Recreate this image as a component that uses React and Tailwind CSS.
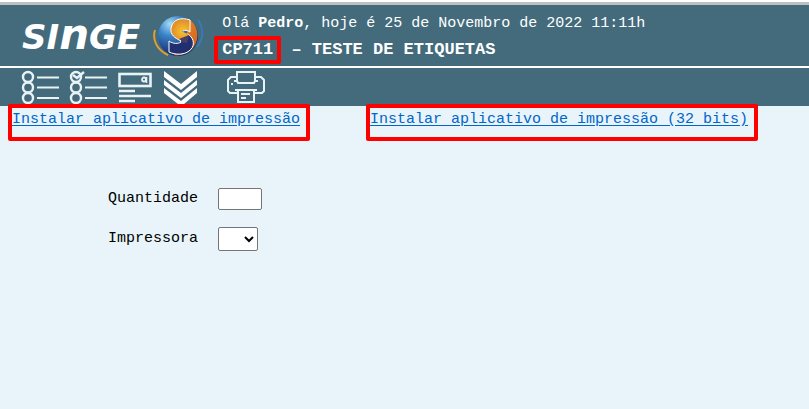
import { useState } from "react";

const ListIcon = ({ checked }) => (
  <svg width="40" height="34" viewBox="0 0 40 34" fill="none" stroke="#e9f3f6">
    <circle cx="8" cy="7" r="5" strokeWidth="2.4" />
    <circle cx="8" cy="17.5" r="5" strokeWidth="2.4" />
    <circle cx="8" cy="28" r="5" strokeWidth="2.4" />
    <path d="M17 7.5h22M17 17.5h22M17 28h22" strokeWidth="2" />
    {checked && <path d="M5 5l4 3 7-6" strokeWidth="2.4" />}
  </svg>
);

const FormIcon = () => (
  <svg width="36" height="34" viewBox="0 0 36 34" fill="none" stroke="#e9f3f6">
    <rect x="3.5" y="4" width="31" height="12" strokeWidth="2.6" />
    <circle cx="28" cy="9.5" r="2" strokeWidth="1.8" />
    <path d="M30.5 7v6" strokeWidth="1.6" />
    <path d="M3 21h16M3 26h32M3 31h16" strokeWidth="2.6" />
  </svg>
);

const ArrowsIcon = () => (
  <svg width="34" height="34" viewBox="0 0 34 34" fill="#ffffff">
    <path d="M0 1l17 13L33 1v6L17 20 0 7z" />
    <path d="M0 10l17 13 16-13v5L17 28 0 15z" />
    <path d="M0 18l17 13 16-13v5L20 34h-6L0 23z" />
  </svg>
);

const PrinterIcon = () => (
  <svg width="40" height="34" viewBox="0 0 40 34" fill="none" stroke="#e9f3f6" strokeWidth="2">
    <path d="M11 11V2h18v9" />
    <path d="M11 7H5L2 10v11l2 2h7M29 7h6l3 3v11l-2 2h-7" />
    <path d="M8 11h3l1 2h16l1-2h3M9 20h22" />
    <path d="M12 20v12h16V20" />
    <path d="M15 24h9M15 28h5" />
    <path d="M6 13v2" />
  </svg>
);

const Globe = () => (
  <svg width="54" height="46" viewBox="0 0 54 46" fill="none">
    <defs>
      <radialGradient id="blue" cx="0.3" cy="0.2" r="0.75">
        <stop offset="0" stopColor="#a5dcf8" />
        <stop offset="0.4" stopColor="#3a84c8" />
        <stop offset="1" stopColor="#1b2f72" />
      </radialGradient>
      <linearGradient id="orange" x1="0" y1="0" x2="1" y2="1">
        <stop offset="0" stopColor="#e8902f" />
        <stop offset="1" stopColor="#cf601c" />
      </linearGradient>
      <radialGradient id="sun" gradientUnits="userSpaceOnUse" cx="31" cy="18" r="12">
        <stop offset="0" stopColor="#f8c52c" />
        <stop offset="1" stopColor="#e08a2a" />
      </radialGradient>
    </defs>
    <path d="M3 17c-3 10 2 20 13 25" stroke="#e0a030" strokeWidth="2" />
    <path d="M46 7c6 9 6 18-1 27" stroke="#3b78b8" strokeWidth="2" />
    <circle cx="26" cy="23" r="20" fill="url(#blue)" />
    <path d="M37 6a20 20 0 0 1-15 36l8-10 5-12z" fill="url(#orange)" />
    {/* lower and upper halves of the swirl */}
    <path
      d="M17 28c4 3 9 3 12 1l-2-5 9-3c7 5 7 13 1 17-5 4-14 4-20 1z"
      fill="#20306f"
      stroke="#ffffff"
    />
    <path
      d="M38 7v12c-3-2-6-2-8-1 2 2 5 2 7 4l-8 6c-6-3-11-6-10-13 2-9 10-11 19-8z"
      fill="url(#sun)"
    />
    <path
      d="M29 28c-6-3-11-6-10-13 2-9 10-11 19-8v12c-3-2-5-2-7-1"
      stroke="#ffffff"
    />
    <path d="M27 26c2 1 3 2 2 3l6 1 2-8z" fill="#4a3d68" />
  </svg>
);

const Header = () => (
  <header className="flex h-16 items-center gap-3 border-t-3 border-[#c0c0c0] bg-[#436b7c] pl-[22px] text-white">
    <div className="flex shrink-0 items-center gap-3">
      <span className="pt-px font-['DejaVu_Sans'] text-[34px] leading-10 font-bold italic">
        SI<span className="text-[42px] leading-10">n</span>GE
      </span>
      <Globe />
    </div>
    <div className="pt-1 pl-1">
      <p className="text-[15px] leading-6">
        Olá <b>Pedro</b>, hoje é 25 de Novembro de 2022 11:11h
      </p>
      <h1 className="-ml-2 flex items-center text-[17px] leading-5 font-bold">
        <span className="rounded-xs border-4 border-[#ff0000] px-1">CP711</span>
        <span className="whitespace-pre"> – TESTE DE ETIQUETAS</span>
      </h1>
    </div>
  </header>
);

const Toolbar = () => (
  <nav className="flex h-10 items-center border-t-2 border-white bg-[#436b7c] pl-5">
    <button type="button" aria-label="Lista" className="mr-2">
      <ListIcon />
    </button>
    <button type="button" aria-label="Selecionar" className="mr-2">
      <ListIcon checked />
    </button>
    <button type="button" aria-label="Consultar" className="mr-3">
      <FormIcon />
    </button>
    <button type="button" aria-label="Avançar" className="mr-7">
      <ArrowsIcon />
    </button>
    <button type="button" aria-label="Imprimir">
      <PrinterIcon />
    </button>
  </nav>
);

const linkStyle =
  "h-[37px] rounded-xs border-4 border-[#ff0000] pr-[6px] leading-6 text-[#0066cc] underline underline-offset-2";

export default function App() {
  const [quantidade, setQuantidade] = useState("");
  const [impressora, setImpressora] = useState("");

  return (
    <div className="min-h-screen bg-[#e8f4f9] font-['Liberation_Mono',monospace] text-[15px] text-black">
      <div className="border-t-2 border-white">
        <Header />
        <Toolbar />
      </div>
      <main>
        <div className="relative -mt-0.5 flex gap-14 pl-2">
          <a href="#instalar" className={linkStyle}>
            Instalar aplicativo de impressão
          </a>
          <a href="#instalar32" className={linkStyle}>
            Instalar aplicativo de impressão (32 bits)
          </a>
        </div>
        <form className="mt-[46px] flex flex-col gap-4 pl-27">
          <div className="flex h-6 items-center gap-5">
            <label htmlFor="quantidade">Quantidade</label>
            <input
              id="quantidade"
              type="text"
              value={quantidade}
              onChange={(e) => setQuantidade(e.target.value)}
              className="h-[22px] w-11 rounded-xs border border-[#767676] bg-white px-1"
            />
          </div>
          <div className="flex h-6 items-center gap-5">
            <label htmlFor="impressora">Impressora</label>
            <select
              id="impressora"
              value={impressora}
              onChange={(e) => setImpressora(e.target.value)}
              className="h-6 w-10 rounded-xs border border-[#767676] bg-white"
            >
              <option value=""></option>
            </select>
          </div>
        </form>
      </main>
    </div>
  );
}
